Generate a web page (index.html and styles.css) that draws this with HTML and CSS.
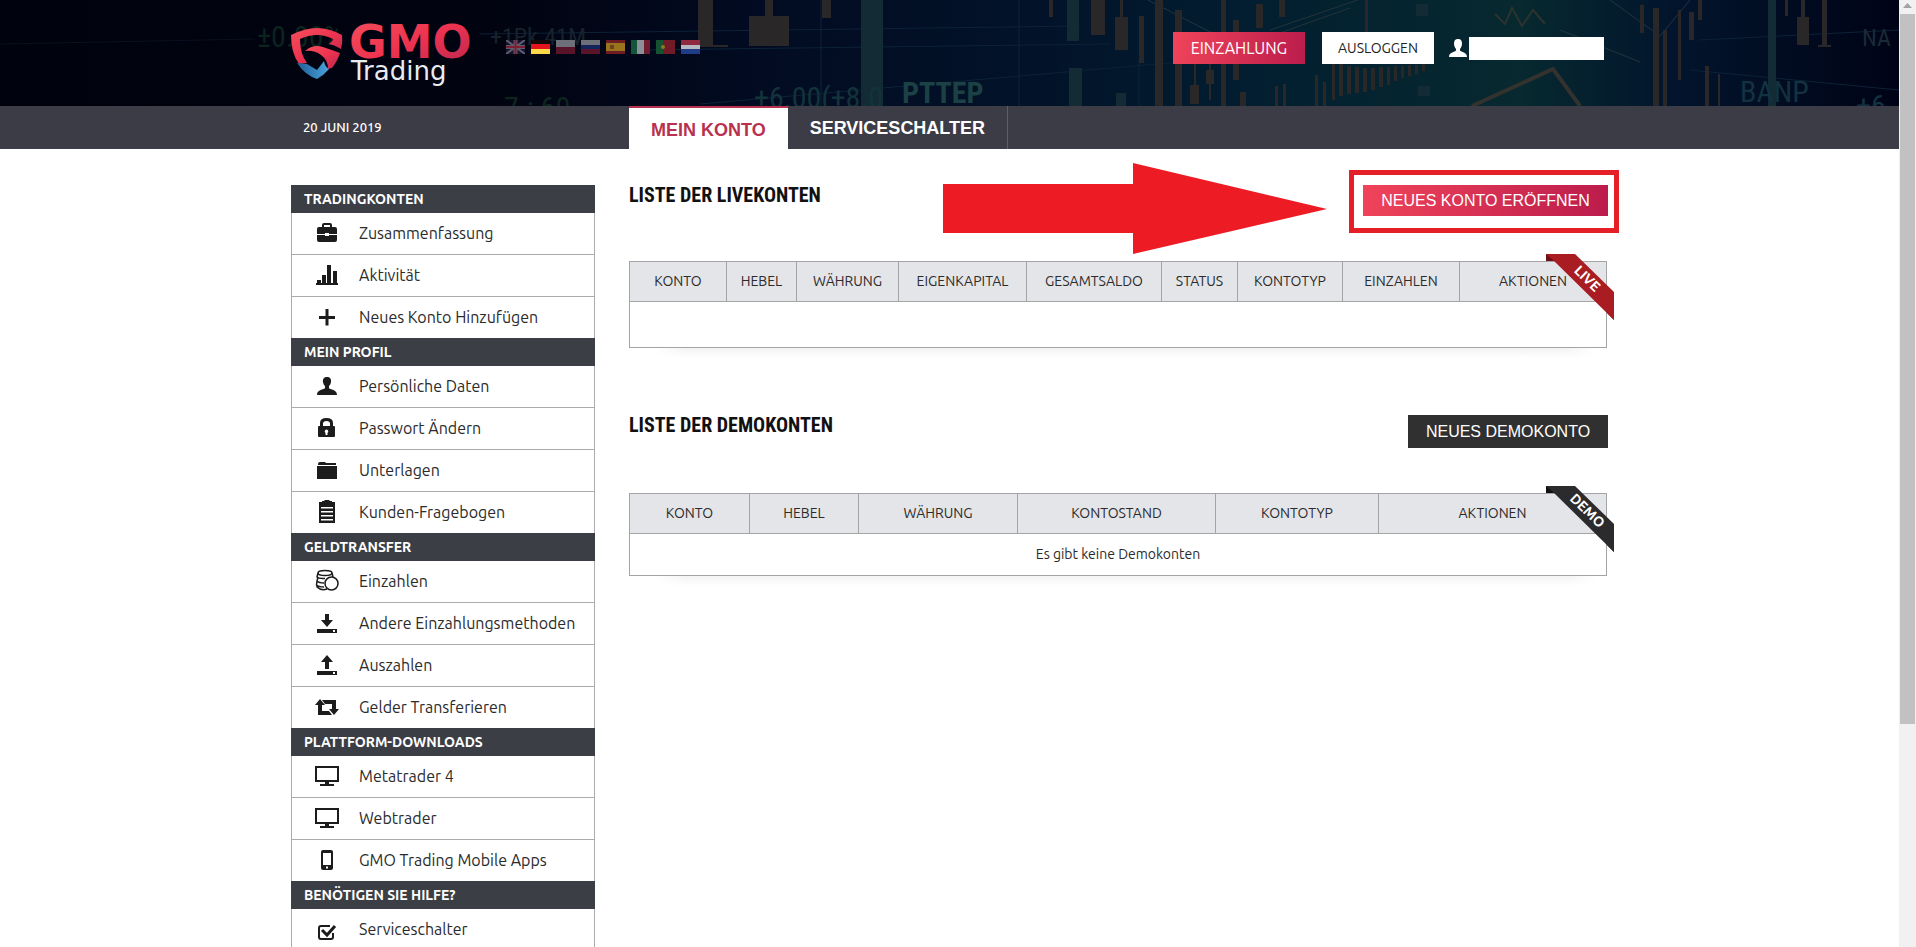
FILE: index.html
```html
<!DOCTYPE html>
<html lang="de">
<head>
<meta charset="utf-8">
<meta name="viewport" content="width=device-width, initial-scale=1">
<title>GMO Trading – Mein Konto</title>
<link rel="stylesheet" href="styles.css">
</head>
<body>
<div class="page">
  <header class="header">
    <svg class="header-art" viewBox="0 0 1899 106" preserveAspectRatio="xMidYMid slice" aria-hidden="true">
      <defs>
        <linearGradient id="sky" x1="0" x2="1" y1="0" y2="0">
          <stop offset="0" stop-color="#00020e"/>
          <stop offset=".26" stop-color="#010310"/>
          <stop offset=".4" stop-color="#020b22"/>
          <stop offset=".55" stop-color="#021329"/>
          <stop offset=".66" stop-color="#021e30"/>
          <stop offset=".8" stop-color="#07292f"/>
          <stop offset=".88" stop-color="#02152d"/>
          <stop offset="1" stop-color="#000316"/>
        </linearGradient>
      </defs>
      <rect width="1899" height="106" fill="url(#sky)"/>
      <g stroke="#0c2238" fill="none">
        <path d="M480 34 1080 26M640 50 1110 44M700 104 1180 62M1019 0V106M821 0V106M1139 60V106M1700 40 1899 30M1690 70 1899 90"/>
        <path stroke="#0a1020" d="M0 44 255 39"/>
        <path stroke="#24343c" d="M1148 0 1210 32 1260 40 1350 8M1270 30 1358 0M1610 0 1660 36 1690 0M1560 30 1640 62"/>
      </g>
      <g fill="#2a2729">
        <path d="M698 0h15v47h-15zM765 0h8v16h-8zM749 16h40v30h-40zM822 0h9v18h-9zM713 45h15v2h-15z"/>
        <path d="M1049 0h4v17h-4zM1091 0h14v35h-14zM1115 17h13v33h-13zM1120 0h3v17h-3zM1139 16h5v47h-5z"/>
        <path d="M1155 0h8v106h-8zM1175 10h7v96h-7zM1221 0h5v106h-5zM1233 20h6v60h-6zM1256 4h7v24h-7zM1279 0h6v17h-6zM1365 0h3v64h-3z"/>
        <path d="M1190 85h9v19h-9zM1194 62h2v23h-2zM1206 70h8v14h-8zM1209 55h2v45h-2zM1240 92h6v14h-6z"/>
        <path d="M1275 86h3v20h-3zM1283 84h3v22h-3zM1315 75h3v31h-3zM1323 82h3v24h-3zM1332 60h3v40h-3zM1339 64h4v32h-4zM1347 66h4v28h-4zM1355 67h4v26h-4zM1363 68h4v24h-4zM1371 68h4v22h-4zM1379 67h4v20h-4zM1387 67h3v18h-3zM1394 66h3v15h-3zM1401 66h3v12h-3zM1408 65h3v11h-3zM1415 65h3v9h-3zM1422 64h3v7h-3z"/>
        <path d="M1640 5h4v28h-4zM1653 8h6v98h-6zM1663 30h4v76h-4zM1678 10h3v70h-3zM1689 12h5v28h-5zM1698 0h4v20h-4zM1705 66h4v40h-4zM1718 74h2v32h-2zM1785 0h3v16h-3zM1797 17h12v28h-12zM1801 0h4v17h-4zM1822 0h5v47h-5zM1818 45h13v2h-13z"/>
      </g>
      <g fill="#122b35">
        <path d="M861 0h22v106h-22zM1067 0h12v41h-12zM1069 68h13v38h-13zM1116 93h10v13h-10zM1768 0h8v106h-8zM1416 4h12v12h-12zM1418 86h12v10h-12z"/>
      </g>
      <path d="M1472 106 1553 69 1580 106" fill="none" stroke="#33322f" stroke-width="4"/>
      <path d="M1495 14 1505 24 1512 8 1522 26 1533 10 1545 24" fill="none" stroke="#2c332e" stroke-width="2"/>
      <g class="ticker">
        <text x="257" y="47" fill="#0b241d">±0.00%</text>
        <text x="490" y="45" class="ticker-small" fill="#16222c">+1Pk.41M</text>
        <text x="504" y="118" fill="#0c261f">7.: 60</text>
        <text x="754" y="108" fill="#12333a">+6.00(+8.0</text>
        <text x="902" y="103" fill="#1b4144" class="ticker-bold">PTTEP</text>
        <text x="1740" y="102" fill="#123241">BANP</text>
        <text x="1862" y="46" class="ticker-small" fill="#1a2936">NA</text>
        <text x="1856" y="116" fill="#123241">+6</text>
      </g>
    </svg>
    <div class="container header-row">
      <a class="logo" href="#" aria-label="GMO Trading">
        <svg width="192" height="58" viewBox="0 0 192 58" role="img" aria-hidden="true">
          <defs>
            <linearGradient id="red" x1="0" x2="1" y1="0" y2="1">
              <stop offset="0" stop-color="#f4505c"/><stop offset=".5" stop-color="#ee3350"/><stop offset="1" stop-color="#b92750"/>
            </linearGradient>
            <linearGradient id="blue" x1="0" x2="1"><stop offset="0" stop-color="#1e5f96"/><stop offset="1" stop-color="#4ba3dc"/></linearGradient>
          </defs>
          <path fill="url(#red)" d="M0 9Q14 2 26 2T51 9Q52 16 50 23 44 19 38 18 42 15 42 13 34 9 26 9T9 13Q9 28 16 37L8 38Q0 27 0 9Z"/>
          <path fill="url(#red)" d="M14 25Q22 18 32 21 41 24 49 27 46 36 41 42L37 43Q37 34 30 29 23 24 14 25Z"/>
          <path fill="url(#blue)" d="M6 37 16 38 26 44 33 35Q34 41 38 43 33 49 26 53 14 49 6 37Z"/>
          <text class="logo-main" x="58" y="32" fill="url(#red)">GMO</text>
          <text class="logo-sub" x="60" y="54" fill="#e8ebf2">Trading</text>
        </svg>
      </a>
      <nav class="flags" aria-label="Sprache">
        <a href="#" class="flag" aria-label="English"><svg viewBox="0 0 19 14"><path fill="#11152f" d="M0 0h19v14H0z"/><path stroke="#5f5d6b" stroke-width="2" d="M0 0 19 14M19 0 0 14"/><path stroke="#5f5d6b" stroke-width="4" d="M9.5 0V14M0 7H19"/><path stroke="#7c1f35" stroke-width="2" d="M9.5 0V14M0 7H19"/></svg></a>
        <a href="#" class="flag" aria-label="Deutsch"><svg viewBox="0 0 19 14"><path fill="#15090a" d="M0 0h19v5H0z"/><path fill="#e3141c" d="M0 4h19v5H0z"/><path fill="#fbd84a" d="M0 9h19v5H0z"/></svg></a>
        <a href="#" class="flag" aria-label="Polski"><svg viewBox="0 0 19 14"><path fill="#6d7079" d="M0 0h19v7H0z"/><path fill="#5a142a" d="M0 7h19v7H0z"/></svg></a>
        <a href="#" class="flag" aria-label="Русский"><svg viewBox="0 0 19 14"><path fill="#6d7079" d="M0 0h19v5H0z"/><path fill="#14245c" d="M0 5h19v5H0z"/><path fill="#5a142a" d="M0 9h19v5H0z"/></svg></a>
        <a href="#" class="flag" aria-label="Español"><svg viewBox="0 0 19 14"><path fill="#6d1c24" d="M0 0h19v14H0z"/><path fill="#98741e" d="M0 3h19v8H0z"/><path fill="#70401f" d="M4 5h4v4H4z"/></svg></a>
        <a href="#" class="flag" aria-label="Italiano"><svg viewBox="0 0 19 14"><path fill="#14543a" d="M0 0h7v14H0z"/><path fill="#8c909a" d="M6 0h7v14H6z"/><path fill="#701b2e" d="M13 0h6v14h-6z"/></svg></a>
        <a href="#" class="flag" aria-label="Português"><svg viewBox="0 0 19 14"><path fill="#145232" d="M0 0h8v14H0z"/><path fill="#701b25" d="M7 0h12v14H7z"/><circle cx="7" cy="7" r="2" fill="#8a7a25"/></svg></a>
        <a href="#" class="flag" aria-label="Nederlands"><svg viewBox="0 0 19 14"><path fill="#8f2940" d="M0 0h19v5H0z"/><path fill="#b5b8c1" d="M0 5h19v5H0z"/><path fill="#203c86" d="M0 9h19v5H0z"/></svg></a>
      </nav>
      <div class="account">
        <button type="button" class="btn btn-deposit">EINZAHLUNG</button>
        <button type="button" class="btn btn-logout">AUSLOGGEN</button>
        <div class="user">
          <svg width="18" height="18" viewBox="0 0 18 18" fill="#fff" aria-hidden="true"><path d="M9 0c3 0 4 2 4 4.500S12 9 11 10v1.500c1 1.500 7 1.500 7 6.500H0c0-5 6-5 7-6.500V10C6 9 5 7 5 4.500S6 0 9 0Z"/></svg>
          <span class="user-name"></span>
        </div>
      </div>
    </div>
  </header>

  <div class="tabbar">
    <div class="container tabbar-row">
      <time class="date" datetime="2019-06-20">20 JUNI 2019</time>
      <nav class="tabs">
        <a class="tab tab-active" href="#">MEIN KONTO</a>
        <a class="tab" href="#">SERVICESCHALTER</a>
      </nav>
    </div>
  </div>

  <div class="container columns">
    <aside class="sidebar">
      <h3>TRADINGKONTEN</h3>
      <ul>
        <li><a href="#"><svg class="icon" viewBox="0 0 24 24"><path d="M7 6V4q0-2 2-2h6q2 0 2 2v2h3q2 0 2 2v5h-8v-1h-4v1H2V8q0-2 2-2zM9 4v2h6V4zM2 14h8v1h4v-1h8v5q0 2-2 2H4q-2 0-2-2z" fill-rule="evenodd"/></svg>Zusammenfassung</a></li>
        <li><a href="#"><svg class="icon" viewBox="0 0 24 24"><path d="M1 20h22v2H1zM2 17h4v3H2zM7 12h4v8H7zM12 2h4v18h-4zM18 8h4v12h-4z"/></svg>Aktivität</a></li>
        <li><a href="#"><svg class="icon" viewBox="0 0 24 24"><path d="M10.500 4h3v7H20v3h-6.500v6.500h-3V14H4v-3h6.500z"/></svg>Neues Konto Hinzufügen</a></li>
      </ul>
      <h3>MEIN PROFIL</h3>
      <ul>
        <li><a href="#"><svg class="icon" viewBox="0 0 24 24"><path d="M12 3c3 0 4.500 2 4 5-.3 2-1 3-2 4v2c1 2 8 1 8 7H2c0-6 7-5 8-7v-2c-1-1-1.700-2-2-4-.5-3 1-5 4-5z"/></svg>Persönliche Daten</a></li>
        <li><a href="#"><svg class="icon" viewBox="0 0 24 24"><path fill-rule="evenodd" d="M5 10V7q0-5 6.500-5T18 7v3h1q1 0 1 1v9q0 1-1 1H4q-1 0-1-1v-9q0-1 1-1zm3 0h7V7.500Q15 5 11.500 5T8 7.500zm2.500 7v2h2v-2q2-2.500-1-3.500-3 1-1 3.500z"/></svg>Passwort Ändern</a></li>
        <li><a href="#"><svg class="icon" viewBox="0 0 24 24"><path d="M3 6q0-2 2-2h5l1 1h10v2H3zM2 8h20v13H2z"/></svg>Unterlagen</a></li>
        <li><a href="#"><svg class="icon" viewBox="0 0 24 24"><path fill-rule="evenodd" d="M4 2h4l2-2h4l2 2h4v21H4zM6 7v1.500h12V7zm0 4v1.500h12V11zm0 4v1.500h12V15zm0 4v1.500h12V19z"/><path d="M7 1h10v3H7z"/></svg>Kunden-Fragebogen</a></li>
      </ul>
      <h3>GELDTRANSFER</h3>
      <ul>
        <li><a href="#"><svg class="icon" viewBox="0 0 24 24"><g fill="none" stroke="#1c1c1c" stroke-width="1.500"><ellipse cx="10" cy="4" rx="7" ry="2.500"/><path d="M3 4 2 8q2 2 8 1.500M3 8 2 12q2 2 7 2M2 12l-.5 4q2 2 7.500 2M2 16v2q4 4 10 2M17 4l1 4"/><circle cx="16.500" cy="14.500" r="6.500" fill="#fff"/></g></svg>Einzahlen</a></li>
        <li><a href="#"><svg class="icon" viewBox="0 0 24 24"><path fill-rule="evenodd" d="M10 3h4v6h4l-6 7-6-7h4zM2 18h20v4H2zm16 1v2h2v-2z"/></svg>Andere Einzahlungsmethoden</a></li>
        <li><a href="#"><svg class="icon" viewBox="0 0 24 24"><path fill-rule="evenodd" d="m12 2 6 7h-4v7h-4V9H6zM2 18h20v4H2zm16 1v2h2v-2z"/></svg>Auszahlen</a></li>
        <li><a href="#"><svg class="icon" viewBox="0 0 24 24"><path d="m5 4 5 6H7v6h7l3 4H3V10H0zM7 5h14v9h3l-5 6-5-6h3V9h-7z"/></svg>Gelder Transferieren</a></li>
      </ul>
      <h3>PLATTFORM-DOWNLOADS</h3>
      <ul>
        <li><a href="#"><svg class="icon" viewBox="0 0 24 24"><path fill-rule="evenodd" d="M0 2h24v16H14v2h5v2H5v-2h5v-2H0zm2 2v12h20V4z"/></svg>Metatrader 4</a></li>
        <li><a href="#"><svg class="icon" viewBox="0 0 24 24"><path fill-rule="evenodd" d="M0 2h24v16H14v2h5v2H5v-2h5v-2H0zm2 2v12h20V4z"/></svg>Webtrader</a></li>
        <li><a href="#"><svg class="icon" viewBox="0 0 24 24"><path fill-rule="evenodd" d="M8 2h8q2 0 2 2v16q0 2-2 2H8q-2 0-2-2V4q0-2 2-2zm0 3v12h8V5zm3 13.500v2h2v-2z"/></svg>GMO Trading Mobile Apps</a></li>
      </ul>
      <h3>BENÖTIGEN SIE HILFE?</h3>
      <ul>
        <li><a href="#"><svg class="icon" viewBox="0 0 24 24"><path fill="none" stroke="#1c1c1c" stroke-width="2" d="M15 9H6Q4 9 4 11v9q0 2 2 2h10q2 0 2-2v-4"/><path fill="none" stroke="#1c1c1c" stroke-width="3" d="m7 13 5 5 8-9"/></svg>Serviceschalter</a></li>
      </ul>
    </aside>

    <main class="main">
      <section class="accounts">
        <div class="accounts-head">
          <h2>LISTE DER LIVEKONTEN</h2>
          <svg class="arrow" viewBox="0 0 384 92" aria-hidden="true"><path fill="#ed1c24" d="M0 21H190V0L384 46 190 91V70H0Z"/></svg>
          <div class="highlight"><button type="button" class="btn btn-live">NEUES KONTO ERÖFFNEN</button></div>
        </div>
        <div class="table-box">
          <table class="live">
            <colgroup><col class="w97"><col class="w70"><col class="w102"><col class="w128"><col class="w135"><col class="w76"><col class="w105"><col class="w117"><col></colgroup>
            <thead><tr><th>KONTO</th><th>HEBEL</th><th>WÄHRUNG</th><th>EIGENKAPITAL</th><th>GESAMTSALDO</th><th>STATUS</th><th>KONTOTYP</th><th>EINZAHLEN</th><th>AKTIONEN</th></tr></thead>
            <tbody><tr><td colspan="9"></td></tr></tbody>
          </table>
          <svg class="ribbon" viewBox="0 0 68 66" role="img" aria-label="Live"><path fill="#6e1016" d="M0 0h8v7H0zM61 59h7v7z"/><path fill="#a81c22" d="M0 0H29L68 38V66L7 6Z"/><text transform="translate(38 28) rotate(44)">LIVE</text></svg>
        </div>
      </section>

      <section class="accounts">
        <div class="accounts-head">
          <h2>LISTE DER DEMOKONTEN</h2>
          <button type="button" class="btn btn-demo">NEUES DEMOKONTO</button>
        </div>
        <div class="table-box">
          <table>
            <colgroup><col class="w120"><col class="w109"><col class="w159"><col class="w198"><col class="w163"><col></colgroup>
            <thead><tr><th>KONTO</th><th>HEBEL</th><th>WÄHRUNG</th><th>KONTOSTAND</th><th>KONTOTYP</th><th>AKTIONEN</th></tr></thead>
            <tbody><tr><td colspan="6">Es gibt keine Demokonten</td></tr></tbody>
          </table>
          <svg class="ribbon" viewBox="0 0 68 66" role="img" aria-label="Demo"><path fill="#111" d="M0 0h8v7H0zM61 59h7v7z"/><path fill="#2b2b2d" d="M0 0H29L68 38V66L7 6Z"/><text transform="translate(38 28) rotate(44)">DEMO</text></svg>
        </div>
      </section>
    </main>
  </div>
</div>
<div class="scrollbar" aria-hidden="true">
  <svg class="scroll-up" viewBox="0 0 17 14"><path fill="#a3a3a3" d="m4 8 4.500-5L13 8z"/></svg>
  <div class="scroll-thumb"></div>
</div>
</body>
</html>
```
FILE: styles.css
```css
* { box-sizing: border-box; }

body {
  margin: 0;
  display: flex;
  height: 100vh;
  overflow: hidden;
  background: #fff;
  color: #2b2b2b;
  font-family: Ubuntu, "Noto Sans", sans-serif;
  font-size: 14px;
}

a { color: inherit; text-decoration: none; }

.page { flex: 1; min-width: 0; height: 100vh; overflow: hidden; }

.container { max-width: 1317px; margin: 0 auto; }

/* header */
.header { position: relative; background: #00020e; }
.header-art { position: absolute; top: 0; left: 0; width: 100%; height: 100%; }
.ticker { font-family: "Roboto Condensed", "Liberation Sans Narrow", "Liberation Sans", sans-serif; font-size: 30px; }
.ticker-small { font-size: 24px; }
.ticker-bold { font-weight: bold; }
.header-row { position: relative; display: flex; align-items: flex-start; height: 106px; }
.logo { display: block; padding-top: 26px; }
.logo svg { display: block; overflow: visible; }
.logo-main { font: bold 46px "DejaVu Sans", sans-serif; }
.logo-sub { font: 26px "DejaVu Sans", sans-serif; }
.flags { display: flex; gap: 6px; padding: 40px 0 0 23px; }
.flag { display: block; width: 19px; height: 14px; }
.flag svg { display: block; width: 100%; height: 100%; }
.account { display: flex; align-items: center; margin: 32px 4px 0 auto; }

.btn {
  border: 0;
  color: #fff;
  font: 16px/20px "Liberation Sans", Arial, sans-serif;
  white-space: nowrap;
  cursor: pointer;
}
.btn-deposit,
.btn-logout { height: 32px; padding: 0; font-family: Ubuntu, "Noto Sans", sans-serif; }
.btn-deposit { width: 132px; background: linear-gradient(100deg, #f0445a, #bb1c4c); font-size: 16px; }
.btn-logout { width: 112px; margin-left: 17px; background: #fff; color: #222; font-size: 14px; }
.user { display: flex; align-items: center; gap: 2px; margin-left: 15px; }
.user-name { width: 135px; height: 23px; background: #fff; }

/* tabs */
.tabbar { background: #3b3c46; }
.tabbar-row { display: flex; height: 43px; }
.date { width: 338px; padding-left: 12px; color: #fff; font-size: 13px; font-weight: 500; line-height: 42px; }
.tabs { display: flex; }
.tab {
  padding: 0 22px;
  border-right: 1px solid #5d5e68;
  color: #fff;
  font: bold 18px/44px "Liberation Sans", Arial, sans-serif;
}
.tab-active { border-top: 2px solid #b83250; border-right: 0; background: #fff; color: #b83250; }

/* layout */
.columns { display: grid; grid-template-columns: 304px minmax(0, 1fr); gap: 34px; padding-top: 36px; }

/* sidebar */
.sidebar { border: solid #a9abad; border-width: 0 1px; align-self: start; }
.sidebar h3 {
  margin: 0 -1px;
  padding-left: 13px;
  background: #3b3e45;
  color: #fff;
  font-size: 14px;
  line-height: 28px;
}
.sidebar ul { margin: 0; padding: 0; list-style: none; }
.sidebar li + li { border-top: 1px solid #a9abad; }
.sidebar li a { display: flex; align-items: center; height: 41px; padding: 0 0 2px 23px; font-size: 16px; line-height: 20px; }
.icon { width: 24px; height: 24px; margin-right: 20px; fill: #1c1c1c; }

/* account lists */
.accounts { margin-bottom: 67px; }
.accounts-head { position: relative; display: flex; justify-content: space-between; align-items: flex-start; margin-bottom: 45px; }
.accounts h2 {
  margin: 0;
  color: #111;
  font: bold 20px/20px "Liberation Sans Narrow", "Roboto Condensed", "Liberation Sans", sans-serif;
}
.btn-live { display: block; width: 245px; height: 31px; padding: 0; background: linear-gradient(100deg, #f0445a, #bb1c4c); }
.btn-demo { width: 200px; height: 33px; padding: 0; background: #303030; }
.highlight { position: relative; }
.highlight::after { content: ""; position: absolute; inset: -15px -11px -17px -14px; border: 5px solid #e51f28; pointer-events: none; }
.arrow { position: absolute; right: 281px; top: -22px; width: 384px; height: 92px; }

.table-box { position: relative; margin-right: 1px; }
.table-box::after {
  content: "";
  position: absolute;
  left: 28px;
  right: 12px;
  top: 100%;
  height: 10px;
  background: linear-gradient(90deg, #fff, transparent 3%, transparent 97%, #fff), linear-gradient(#f3f3f3, #fff);
}
table { width: 100%; table-layout: fixed; border-collapse: collapse; border: 1px solid #a3a4a6; }
th { height: 40px; padding: 0 0 2px; border: 1px solid #a3a4a6; background: #e4e5e8; font-size: 14px; font-weight: 400; }
td { height: 42px; padding: 0 0 2px; text-align: center; font-size: 14px; }
.live td { height: 46px; }
.w70 { width: 70px; }
.w76 { width: 76px; }
.w97 { width: 97px; }
.w102 { width: 102px; }
.w105 { width: 105px; }
.w109 { width: 109px; }
.w117 { width: 117px; }
.w120 { width: 120px; }
.w128 { width: 128px; }
.w135 { width: 135px; }
.w159 { width: 159px; }
.w163 { width: 163px; }
.w198 { width: 198px; }

.ribbon { position: absolute; top: -7px; right: -7px; width: 68px; height: 66px; }
.ribbon text { fill: #fff; font: bold 14px Ubuntu, "Noto Sans", sans-serif; text-anchor: middle; }

/* scrollbar */
.scrollbar { display: flex; flex-direction: column; width: 17px; height: 100vh; background: #f1f1f1; }
.scroll-up { width: 17px; height: 14px; }
.scroll-thumb { height: 75%; margin: 0 1px; background: #c1c1c1; }
```
